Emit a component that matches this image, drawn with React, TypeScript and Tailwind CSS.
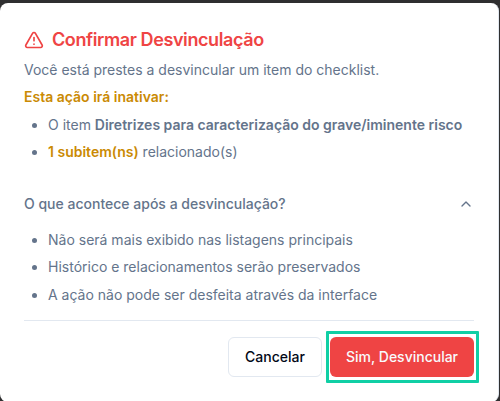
import { ChevronUp, TriangleAlert } from "lucide-react";

const consequences = [
  "Não será mais exibido nas listagens principais",
  "Histórico e relacionamentos serão preservados",
  "A ação não pode ser desfeita através da interface",
];

export default function App() {
  return (
    <div className="h-[401px] w-[500px] overflow-hidden bg-[#2f2f30] pt-[3px] font-['Inter',sans-serif]">
      <div className="h-[399px] w-[499px] rounded-lg border-r border-[#e2e8f0] bg-white px-6 pt-[23px] text-sm text-[#64748b]">
        <h2 className="flex h-7 items-center gap-2 text-lg font-semibold tracking-[-0.4px] text-[#ef4444]">
          <TriangleAlert className="size-5" />
          Confirmar Desvinculação
        </h2>
        <p className="mt-1.5 leading-5">Você está prestes a desvincular um item do checklist.</p>
        <p className="mt-[7px] leading-5 font-semibold text-[#ca8a04]">Esta ação irá inativar:</p>
        <ul className="mt-2 list-disc space-y-[7px] pl-6 leading-5">
          <li>
            O item <strong className="font-semibold">Diretrizes para caracterização do grave/iminente risco</strong>
          </li>
          <li>
            <strong className="font-semibold text-[#ca8a04]">1 subitem(ns)</strong> relacionado(s)
          </li>
        </ul>
        <button className="mt-8 flex h-5 w-[450px] items-center justify-between font-medium">
          O que acontece após a desvinculação?
          <ChevronUp className="size-4" />
        </button>
        <ul className="mt-4 list-disc space-y-[7.4px] pl-6 leading-5">
          {consequences.map((text) => (
            <li key={text}>{text}</li>
          ))}
        </ul>
        <div className="mt-[15px] flex w-[450px] justify-end gap-2 border-t border-[#e2e8f0] pt-4 font-medium">
          <button className="h-10 w-[94px] rounded-md border border-[#e2e8f0] text-[#020817]">Cancelar</button>
          <div className="relative">
            <button className="h-10 w-36 rounded-md bg-[#ef4444] text-[#f8fafc]">Sim, Desvincular</button>
            <span className="pointer-events-none absolute -top-1.5 -right-[5px] -bottom-1.5 -left-1 rounded-[1px] border-[3px] border-[#10cfa5]" />
          </div>
        </div>
      </div>
    </div>
  );
}
